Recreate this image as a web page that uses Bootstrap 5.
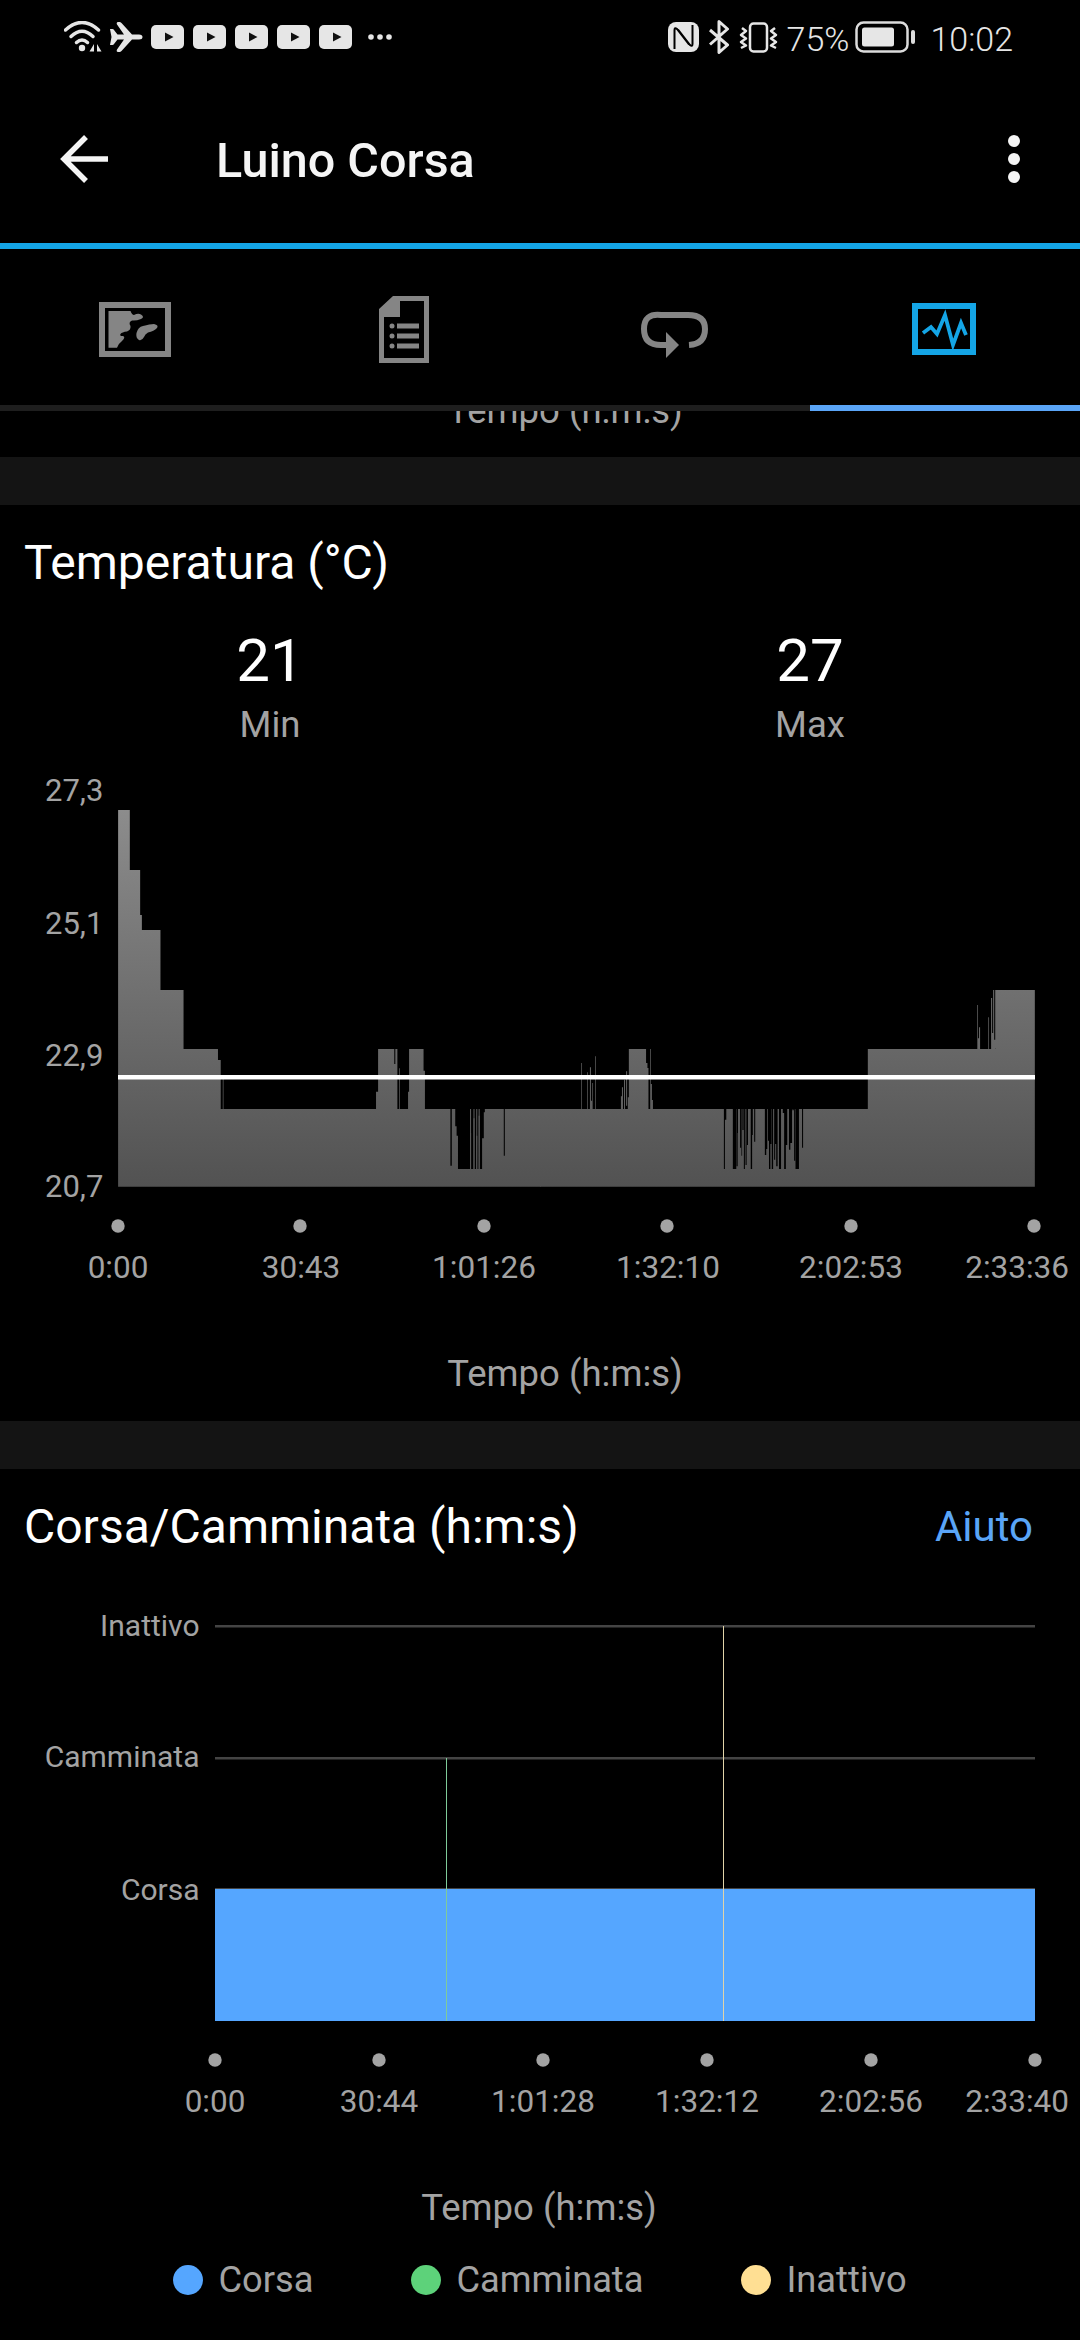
<!DOCTYPE html>
<html lang="it">
<head>
<meta charset="utf-8">
<title>Luino Corsa</title>
<link href="https://cdn.jsdelivr.net/npm/bootstrap@5.3.0/dist/css/bootstrap.min.css" rel="stylesheet">
<style>
html,body{margin:0;background:#000;width:1080px;height:2340px;overflow:hidden}
body{font-family:"Roboto","Liberation Sans",sans-serif;color:#fff}
svg{display:block}
.status-bar{height:74px;padding:0 67px 0 64px;color:#e6e6e6;font-size:34px;font-weight:300;line-height:40px}
.status-left{gap:8px}
.status-yt{gap:9px}
.status-right{gap:9px}
.status-more{margin-left:8px}
.status-batt{margin-left:-3px}
.status-time{margin-left:6px}
.status-txt{padding-top:4px}
.app-head{height:169px;padding:0 60px;flex-wrap:nowrap;justify-content:flex-start}
.app-title{margin:0 0 0 108px;padding-top:4px;font-size:48.5px;font-weight:500;line-height:60px;color:#f5f5f5}
.head-more{margin-left:auto;margin-right:0}
.accent-line{height:6px;background:#14a5e6}
.tab-row{height:156px}
.tab-track{height:6px;background:#1e1e1e}
.tab-active-bar{width:270px;background:#5aa5f7}
.clip-area{height:46px;overflow:hidden}
.clip-area .axis-name{margin-top:-23px}
.band{height:48px;background:#141414}
.sect-head{padding:28px 47px 0 24px}
.sect-title{margin:0;font-size:48px;font-weight:400;line-height:60px;color:#fff}
.help-link{font-size:42px;line-height:60px;color:#5aa5f7;text-decoration:none}
.stats{margin-top:33px}
.stat-num{font-size:60px;line-height:70px;color:#fff}
.stat-lbl{margin-top:6px;font-size:36.500px;line-height:46px;color:#a3a3a3}
.plot-temp{margin-top:11px}
.plot-run{margin-top:32px}
.axis-name{font-size:36.500px;line-height:46px;color:#a3a3a3;text-align:center}
.axis-temp{padding-left:50px;margin-top:32px}
.sect-temp{height:916px}
.axis-run{padding-right:2px;margin-top:56px}
.legend-row{margin-top:26px;gap:98px;font-size:36.250px;line-height:46px;color:#a3a3a3}
.legend-item{gap:15px}
.legend-dot{width:30px;height:30px;border-radius:50%}
.dot-run{background:#55a6ff}
.dot-walk{background:#5dd27a}
.dot-idle{background:#ffdf93}
.tick{font-family:"Roboto","Liberation Sans",sans-serif;font-size:31.500px;fill:#a3a3a3}
.tick-y{font-size:31px}
.tick-c{font-size:30px;text-anchor:end}
.tick-m{text-anchor:middle}
.tick-e{text-anchor:end}
</style>
</head>
<body>
<div class="status-bar d-flex justify-content-between align-items-center">
  <div class="status-left d-flex align-items-center">
    <svg width="38" height="32" viewBox="64 22 38 32" fill="none" stroke="#e6e6e6" stroke-linecap="round">
      <path d="M65.500 31Q82 16 98.500 31" stroke-width="3.500"/>
      <path d="M71 37.500Q82 27 93 37.500" stroke-width="3.500"/>
      <path d="M76.500 43.500Q82 38.500 87.500 43.500" stroke-width="3.500"/>
      <circle cx="82" cy="49" r="3.200" fill="#e6e6e6" stroke="none"/>
      <path d="M94 45V52.500H89.500ZM97 45V52.500H101.500Z" fill="#e6e6e6" stroke="none"/>
    </svg>
    <svg width="33" height="30" viewBox="109 22 33 30" fill="#e6e6e6">
      <path d="M109 29h2.500q1 0 1.500 1l3.500 4.500H123L116 24.500q-1-2 1-2.500h1.500q1 0 2 1L131 34.500h7q3.500 0 3.500 2.500t-3.500 2.500h-7L120.500 51q-1 1-2 1H117q-2-.5-1-2.500L123 39.500h-6.500L113 44q-.5 1-1.500 1H109l1.500-8Z"/>
    </svg>
    <div class="status-yt d-flex">
      <svg width="33" height="24" viewBox="0 0 33 24"><rect width="33" height="24" rx="5" fill="#e6e6e6"/><path d="M14 7.500 22.500 12 14 16.500Z" fill="#111"/></svg>
      <svg width="33" height="24" viewBox="0 0 33 24"><rect width="33" height="24" rx="5" fill="#e6e6e6"/><path d="M14 7.500 22.500 12 14 16.500Z" fill="#111"/></svg>
      <svg width="33" height="24" viewBox="0 0 33 24"><rect width="33" height="24" rx="5" fill="#e6e6e6"/><path d="M14 7.500 22.500 12 14 16.500Z" fill="#111"/></svg>
      <svg width="33" height="24" viewBox="0 0 33 24"><rect width="33" height="24" rx="5" fill="#e6e6e6"/><path d="M14 7.500 22.500 12 14 16.500Z" fill="#111"/></svg>
      <svg width="33" height="24" viewBox="0 0 33 24"><rect width="33" height="24" rx="5" fill="#e6e6e6"/><path d="M14 7.500 22.500 12 14 16.500Z" fill="#111"/></svg>
    </div>
    <svg class="status-more" width="24" height="6" viewBox="0 0 24 6" fill="#e6e6e6"><circle cx="3" cy="3" r="2.800"/><circle cx="12" cy="3" r="2.800"/><circle cx="21" cy="3" r="2.800"/></svg>
  </div>
  <div class="status-right d-flex align-items-center">
    <svg width="31" height="30" viewBox="0 0 31 30"><rect width="31" height="30" rx="8" fill="#e6e6e6"/><path d="M6.500 27V8Q6.500 5 9 7L21 22.500M24.500 3V22Q24.500 25 22 23L10 7.500" fill="none" stroke="#000" stroke-width="2"/></svg>
    <svg width="22" height="34" viewBox="0 0 22 34" fill="none" stroke="#e6e6e6" stroke-width="3" stroke-linejoin="round"><path d="M2 10 19.500 25 11 32.500V1.500L19.500 9 2 24.500"/></svg>
    <svg width="39" height="31" viewBox="0 0 39 31" fill="none" stroke="#e6e6e6" stroke-width="2.500" stroke-linejoin="round"><rect x="11" y="1.500" width="17" height="28" rx="3.500"/><path d="M3 6 7 9 2 13 7 16.500 2 20 7 23.500 2 26"/><path d="M36 6 32 9 37 13 32 16.500 37 20 32 23.500 37 26"/></svg>
    <span class="status-txt">75%</span>
    <svg class="status-batt" width="60" height="32" viewBox="0 0 60 32"><rect x="1.500" y="1.500" width="51" height="29" rx="7" fill="none" stroke="#dcdcdc" stroke-width="2.500"/><rect x="7" y="6.500" width="32" height="19" rx="2.500" fill="#e6e6e6"/><rect x="56" y="9" width="4" height="14" rx="2" fill="#dcdcdc"/></svg>
    <span class="status-time status-txt">10:02</span>
  </div>
</div>

<nav class="navbar app-head">
  <svg width="48" height="48" viewBox="60 135 48 48" fill="none" stroke="#f5f5f5" stroke-width="5.500"><path d="M108 159H64M86 137 64 159 86 181"/></svg>
  <h1 class="app-title">Luino Corsa</h1>
  <svg class="head-more" width="12" height="48" viewBox="0 0 12 48" fill="#f5f5f5"><circle cx="6" cy="6" r="6"/><circle cx="6" cy="24" r="6"/><circle cx="6" cy="42" r="6"/></svg>
</nav>
<div class="accent-line"></div>

<div class="row g-0 tab-row">
  <div class="col-3 d-flex align-items-center justify-content-center">
    <svg width="80" height="80" viewBox="95 287 80 80">
      <rect x="102" y="305" width="66" height="49" fill="none" stroke="#858585" stroke-width="6"/>
      <path fill="#858585" d="M108.500 311H130.500Q132 315 134 315 138 313 141 314.500 145 317 141 319 136 321 132 320.500 128 322 130.500 326 131 330 127 331.500 122 332 120.500 334 119 336 123 336 126 337 122 341 119 343 117 347.700H108.500Z"/>
      <path fill="#858585" d="M136.500 333Q138 327 143 326 150 324 154 324 159 325 157 328 154 331 148 332.500 145 334 144 337 142 341 139 340 135.500 338 136.500 333Z"/>
    </svg>
  </div>
  <div class="col-3 d-flex align-items-center justify-content-center">
    <svg width="80" height="80" viewBox="365 287 80 80">
      <path fill="#858585" fill-rule="evenodd" d="M393 296H429V363H379V309ZM400 301V317H384V358H424V301Z"/>
      <path fill="#858585" d="M397 323.500H419V328.500H397ZM397 333.500H419V338.500H397ZM397 343.500H419V348.500H397Z"/>
      <circle cx="392" cy="326" r="2.500" fill="#858585"/><circle cx="392" cy="336" r="2.500" fill="#858585"/><circle cx="392" cy="346" r="2.500" fill="#858585"/>
    </svg>
  </div>
  <div class="col-3 d-flex align-items-center justify-content-center">
    <svg width="80" height="80" viewBox="635 287 80 80">
      <path fill="none" stroke="#858585" stroke-width="6" d="M676 345H661Q644 345 644 329T661 315H688Q705 315 705 329 705 344 689 345"/>
      <path fill="#858585" d="M666 332 679 345 666 358Z"/>
    </svg>
  </div>
  <div class="col-3 d-flex align-items-center justify-content-center">
    <svg width="80" height="80" viewBox="905 287 80 80">
      <rect x="915" y="306" width="58" height="46" fill="none" stroke="#14a5e6" stroke-width="6"/>
      <path fill="none" stroke="#14a5e6" stroke-width="3.800" d="M923 333 931 327 937 334 945 315 953 345 961 323 966 335"/>
    </svg>
  </div>
</div>
<div class="tab-track d-flex justify-content-end"><div class="tab-active-bar"></div></div>

<div class="clip-area"><div class="axis-name axis-temp">Tempo (h:m:s)</div></div>
<div class="band"></div>

<section class="sect-temp">
  <div class="sect-head"><h2 class="sect-title">Temperatura (°C)</h2></div>
  <div class="row g-0 stats text-center">
    <div class="col-6"><div class="stat-num">21</div><div class="stat-lbl">Min</div></div>
    <div class="col-6"><div class="stat-num">27</div><div class="stat-lbl">Max</div></div>
  </div>
  <svg class="plot-temp" width="1080" height="560" viewBox="0 760 1080 560">
    <defs><linearGradient id="tempFill" gradientUnits="userSpaceOnUse" x1="0" y1="123" x2="0" y2="1253"><stop offset="0" stop-color="#8c8c8c"/><stop offset="1" stop-color="#525252"/></linearGradient></defs>
    <g transform="translate(0 770) scale(.34435 .33333)">
      <path fill="url(#tempFill)" d="M343 1253V123H377V303H407V438H412V483H466V663H533V840H633V873H641V1020H1092V968H1098V840H1154V1020H1185V968H1188V840H1230V905H1234V1020H1570V1253ZM647 930H649V1020H647ZM1159 898H1161V1020H1159Z"/>
      <path fill="#000" d="M1145 840H1148V885H1145ZM1308 1020H1312V1190H1308ZM1322 1020H1326V1072H1322ZM1326 1020H1330V1100H1326ZM1330 1020H1365V1200H1330ZM1368 1020H1375V1200H1368ZM1378 1020H1383V1200H1378ZM1386 1020H1390V1200H1386ZM1393 1020H1400V1200H1393ZM1400 1020H1405V1108H1400ZM1405 1020H1408V1030H1405ZM1463 1020H1466V1160H1463Z"/>
      <path fill="url(#tempFill)" d="M1365 1092H1368V1200H1365ZM1375 1048H1378V1200H1375ZM1383 1100H1386V1200H1383ZM1390 1040H1393V1200H1390Z"/>
    </g>
    <g transform="translate(540 770) scale(.34435 .33333)">
      <path fill="url(#tempFill)" d="M0 1253V1020H952V840H1322V663H1437V1253ZM120 882H122V1020H120ZM137 910H139V1020H137ZM145 895H148V995H151V1020H145ZM152 942H154V1020H152ZM160 862H162V1020H160ZM235 982H238V1020H235ZM238 955H241V1020H238ZM244 932H247V1020H244ZM250 907H253V1010H250ZM255 985H258V1020H255ZM258 840H308V882H312V897H315V1020H258ZM320 840H322V1020H320ZM322 945H325V1020H322ZM325 993H328V1020H325ZM1270 708H1272V840H1270ZM1272 808H1275V840H1272ZM1275 775H1278V840H1275ZM1302 745H1304V840H1302ZM1310 687H1313V840H1310ZM1313 792H1316V840H1313ZM1316 663H1319V840H1316ZM1319 812H1322V840H1319Z"/>
      <path fill="#000" d="M534 1020H537V1200H534ZM537 1020H541V1052H537ZM560 1020H570V1200H560ZM571 1020H575V1092H571ZM571 1092H574V1192H571ZM581 1020H584V1136H581ZM585 1020H587V1160H585ZM588 1020H591V1083H588ZM592 1020H595V1200H592ZM597 1020H600V1188H597ZM601 1020H604V1128H601ZM612 1020H616V1200H612ZM616 1020H618V1098H616ZM622 1020H625V1118H622ZM653 1020H657V1158H653ZM657 1020H660V1140H657ZM662 1020H665V1115H662ZM665 1020H669V1200H665ZM669 1020H672V1125H669ZM673 1020H677V1200H673ZM680 1020H683V1172H680ZM683 1020H686V1125H683ZM686 1020H690V1192H686ZM694 1020H700V1200H694ZM705 1020H709V1032H705ZM709 1020H714V1200H709ZM714 1020H718V1128H714ZM723 1020H727V1142H723ZM727 1020H732V1122H727ZM733 1020H737V1024H733ZM738 1020H741V1175H738ZM742 1020H752V1200H742ZM761 1020H764V1136H761Z"/>
    </g>
    <rect x="118" y="1076" width="917" height="4.500" fill="#fff"/>
    <g class="tick tick-y">
      <text x="45" y="802">27,3</text><text x="45" y="935">25,1</text><text x="45" y="1067">22,9</text><text x="45" y="1198">20,7</text>
    </g>
    <g fill="#a3a3a3"><circle cx="118" cy="1227" r="6.700"/><circle cx="300" cy="1227" r="6.700"/><circle cx="484" cy="1227" r="6.700"/><circle cx="667" cy="1227" r="6.700"/><circle cx="851" cy="1227" r="6.700"/><circle cx="1034" cy="1227" r="6.700"/></g>
    <g class="tick tick-m">
      <text x="118" y="1279">0:00</text><text x="301" y="1279">30:43</text><text x="484" y="1279">1:01:26</text><text x="668" y="1279">1:32:10</text><text x="851" y="1279">2:02:53</text><text class="tick-e" x="1069" y="1279">2:33:36</text>
    </g>
  </svg>
  <div class="axis-name axis-temp">Tempo (h:m:s)</div>
</section>
<div class="band"></div>

<section>
  <div class="sect-head d-flex justify-content-between align-items-start">
    <h2 class="sect-title">Corsa/Camminata (h:m:s)</h2>
    <a class="help-link" href="#">Aiuto</a>
  </div>
  <svg class="plot-run" width="1080" height="540" viewBox="0 1590 1080 540">
    <rect x="215" y="1626" width="820" height="2.500" fill="#444"/>
    <rect x="215" y="1758" width="820" height="2.500" fill="#444"/>
    <rect x="215" y="1889" width="820" height="2" fill="#444"/>
    <rect x="215" y="1890" width="820" height="132" fill="#55a6ff"/>
    <rect x="446" y="1759" width="1" height="263" fill="#7fcb9a"/>
    <rect x="723" y="1627" width="1" height="395" fill="#e0d3a8"/>
    <g class="tick tick-c">
      <text x="199.500" y="1637">Inattivo</text><text x="199.500" y="1768">Camminata</text><text x="199.500" y="1901">Corsa</text>
    </g>
    <g fill="#a3a3a3"><circle cx="215" cy="2061" r="6.700"/><circle cx="379" cy="2061" r="6.700"/><circle cx="543" cy="2061" r="6.700"/><circle cx="707" cy="2061" r="6.700"/><circle cx="871" cy="2061" r="6.700"/><circle cx="1035" cy="2061" r="6.700"/></g>
    <g class="tick tick-m">
      <text x="215" y="2113">0:00</text><text x="379" y="2113">30:44</text><text x="543" y="2113">1:01:28</text><text x="707" y="2113">1:32:12</text><text x="871" y="2113">2:02:56</text><text class="tick-e" x="1069" y="2113">2:33:40</text>
    </g>
  </svg>
  <div class="axis-name axis-run">Tempo (h:m:s)</div>
  <div class="legend-row d-flex justify-content-center">
    <div class="legend-item d-flex align-items-center"><span class="legend-dot dot-run"></span><span>Corsa</span></div>
    <div class="legend-item d-flex align-items-center"><span class="legend-dot dot-walk"></span><span>Camminata</span></div>
    <div class="legend-item d-flex align-items-center"><span class="legend-dot dot-idle"></span><span>Inattivo</span></div>
  </div>
</section>
<script src="https://cdn.jsdelivr.net/npm/bootstrap@5.3.0/dist/js/bootstrap.bundle.min.js"></script>
</body>
</html>
